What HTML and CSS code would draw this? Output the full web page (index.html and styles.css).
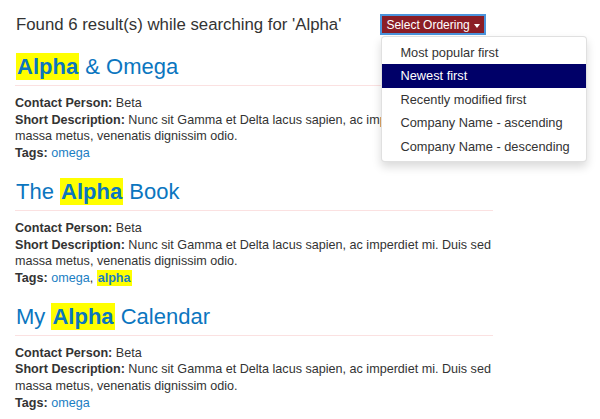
FILE: index.html
```html
<!DOCTYPE html>
<html lang="en">
<head>
    <meta charset="UTF-8">
    <meta name="viewport" content="width=device-width, initial-scale=1.0">
    <title>Search results</title>
    <link rel="stylesheet" href="styles.css">
</head>
<body>
    <div class="container">
        <div class="results-header">
            <h3>Found 6 result(s) while searching for 'Alpha'</h3>
            <div class="dropdown">
                <button class="order-btn">Select Ordering <span class="caret"></span></button>
                <ul class="dropdown-menu">
                    <li><a href="#">Most popular first</a></li>
                    <li class="active"><a href="#">Newest first</a></li>
                    <li><a href="#">Recently modified first</a></li>
                    <li><a href="#">Company Name - ascending</a></li>
                    <li><a href="#">Company Name - descending</a></li>
                </ul>
            </div>
        </div>

        <div class="result">
            <h2><a href="#"><mark>Alpha</mark> &amp; Omega</a></h2>
            <p>
                <b>Contact Person:</b> Beta<br>
                <b>Short Description:</b> <span>Nunc sit Gamma et Delta lacus sapien, ac imperdiet mi. Duis sed massa metus, venenatis dignissim odio.</span><br>
                <b>Tags:</b> <a href="#">omega</a>
            </p>
        </div>

        <div class="result">
            <h2><a href="#">The <mark>Alpha</mark> Book</a></h2>
            <p>
                <b>Contact Person:</b> Beta<br>
                <b>Short Description:</b> <span>Nunc sit Gamma et Delta lacus sapien, ac imperdiet mi. Duis sed massa metus, venenatis dignissim odio.</span><br>
                <b>Tags:</b> <a href="#">omega</a>, <a href="#"><mark>alpha</mark></a>
            </p>
        </div>

        <div class="result">
            <h2><a href="#">My <mark>Alpha</mark> Calendar</a></h2>
            <p>
                <b>Contact Person:</b> Beta<br>
                <b>Short Description:</b> <span>Nunc sit Gamma et Delta lacus sapien, ac imperdiet mi. Duis sed massa metus, venenatis dignissim odio.</span><br>
                <b>Tags:</b> <a href="#">omega</a>
            </p>
        </div>
    </div>
</body>
</html>
```

FILE: styles.css
```css
body {
    font-family: "Liberation Sans", Arial, sans-serif;
    margin: 0;
    padding: 0 15px;
    color: #333;
    background: white;
}
a {
    color: #1a7ec3;
    text-decoration: none;
}
mark {
    background-color: #ffff00;
    color: inherit;
    font-weight: bold;
    padding: 1px 1px;
}
.results-header {
    display: flex;
    align-items: center;
    margin-top: 14px;
    margin-bottom: 18px;
    height: 21px;
}
.results-header h3 {
    margin: 0 39px 0 1px;
    font-size: 16.8px;
    font-weight: normal;
    line-height: 19px;
}
.dropdown {
    position: relative;
}
.order-btn {
    display: flex;
    align-items: center;
    height: 21px;
    padding: 0 4px;
    font-family: inherit;
    font-size: 12px;
    color: white;
    background-color: #8b1d26;
    border: 2px solid #4b94dc;
    border-radius: 0;
    cursor: pointer;
}
.caret {
    display: inline-block;
    margin-left: 4px;
    margin-top: 2px;
    border-top: 4px solid white;
    border-left: 3.5px solid transparent;
    border-right: 3.5px solid transparent;
}
.dropdown-menu {
    position: absolute;
    top: 22px;
    left: 1px;
    width: 204px;
    margin: 0;
    padding: 4px 0 3px;
    list-style: none;
    background: white;
    border: 1px solid rgba(0,0,0,0.12);
    border-radius: 4px;
    box-shadow: 0 5px 10px rgba(0,0,0,0.15);
    z-index: 10;
}
.dropdown-menu a {
    display: block;
    padding: 3px 18px;
    font-size: 12.8px;
    line-height: 17.4px;
    white-space: nowrap;
    color: #333;
}
.dropdown-menu .active a {
    background-color: #000068;
    color: white;
}
.result {
    width: 478px;
    margin-bottom: 16px;
}
.result h2 {
    margin: 0;
    padding: 0 0 5px 1px;
    font-size: 22px;
    font-weight: normal;
    line-height: 27px;
    border-bottom: 1px solid #fbe1e1;
}
.result h2 a {
    color: #0b76bf;
}
.result p {
    margin: 9px 0 0;
    font-size: 12.6px;
    line-height: 16.7px;
}
```
